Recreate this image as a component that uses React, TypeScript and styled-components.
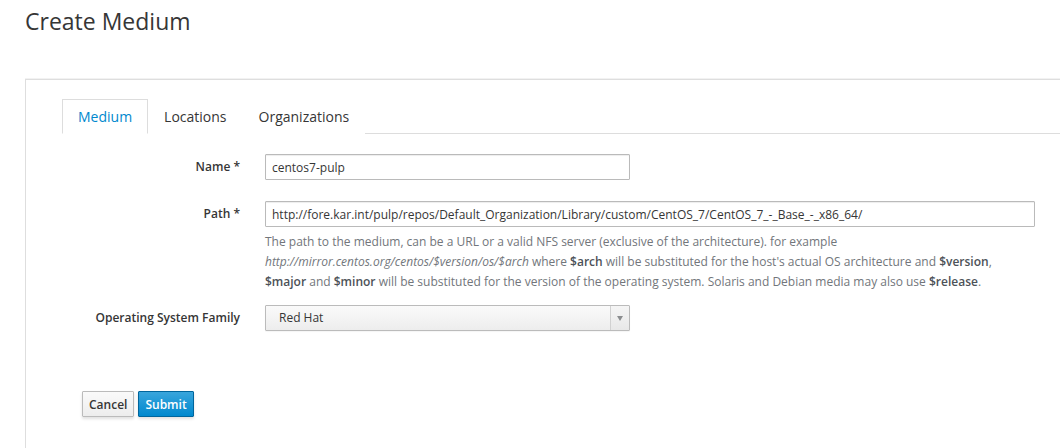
import React from 'react';
import styled, { createGlobalStyle } from "styled-components";

const GlobalStyle = createGlobalStyle`
  html, body {
    margin: 0;
    padding: 0;
    background: #ffffff;
    overflow: hidden;
  }
  body {
    font-family: "Open Sans", "Liberation Sans", Arial, sans-serif;
    font-size: 12px;
    color: #363636;
  }
`

const Page = styled.div`
  padding: 0 0 0 25px;
`

const Title = styled.h1`
  margin: 0;
  padding-top: 4px;
  height: 75px;
  font-size: 23px;
  font-weight: 400;
  line-height: 34px;
  color: #363636;
`

const Panel = styled.div`
  border-top: 1px solid #dedede;
  border-left: 1px solid #dedede;
  box-shadow: 0 -1px 0 #f2f2f2;
  padding: 19px 0 40px 36px;
`

const TabList = styled.ul`
  display: flex;
  margin: 0;
  padding: 0;
  list-style: none;
  border-bottom: 1px solid #dddddd;
`

const Tab = styled.li<{ active?: boolean }>`
  margin-bottom: -1px;
  padding: 0 15px;
  height: 33px;
  line-height: 33px;
  font-size: 14px;
  color: ${({ active }) => active ? "#0088ce" : "#363636"};
  background: #ffffff;
  border: 1px solid ${({ active }) => active ? "#dddddd" : "transparent"};
  border-bottom-color: ${({ active }) => active ? "#ffffff" : "transparent"};
  cursor: pointer;
`

const Form = styled.form`
  padding-top: 20px;
`

const FormGroup = styled.div<{ gap: number }>`
  display: grid;
  grid-template-columns: 178px 1fr;
  column-gap: 25px;
  align-items: start;
  margin-bottom: ${({ gap }) => gap}px;
`

const Label = styled.label`
  text-align: right;
  font-weight: 600;
  line-height: 26px;
  color: #363636;
`

const Field = styled.div<{ width: number }>`
  width: ${({ width }) => width}px;
`

const TextInput = styled.input`
  box-sizing: border-box;
  display: block;
  width: 100%;
  height: 26px;
  padding: 2px 6px;
  font-family: inherit;
  font-size: 12px;
  color: #363636;
  border: 1px solid #bababa;
  border-radius: 1px;
  box-shadow: inset 0 1px 1px rgba(3, 3, 3, 0.075);
  outline: none;
`

const HelpBlock = styled.div`
  margin-top: 5px;
  line-height: 20px;
  color: #72767b;
  white-space: nowrap;
  b { color: #4d5258; font-weight: 600; }
`

const SelectButton = styled.div`
  box-sizing: border-box;
  display: flex;
  height: 26px;
  border: 1px solid #bbbbbb;
  border-radius: 1px;
  background: linear-gradient(to bottom, #fafafa 0%, #ededed 100%);
  box-shadow: 0 1px 1px rgba(3, 3, 3, 0.04);
  cursor: pointer;
`

const SelectValue = styled.span`
  flex: 1;
  padding-left: 13px;
  line-height: 24px;
  color: #363636;
`

const SelectArrow = styled.span`
  width: 18px;
  border-left: 1px solid #d1d1d1;
  display: flex;
  align-items: center;
  justify-content: center;
  background: linear-gradient(to bottom, #f5f5f5 0%, #e8e8e8 100%);
`

const Caret = styled.i`
  width: 0;
  height: 0;
  border-left: 3px solid transparent;
  border-right: 3px solid transparent;
  border-top: 5px solid #8b8d8f;
`

const Actions = styled.div`
  display: flex;
  gap: 4px;
  padding: 60px 0 0 20px;
`

const Button = styled.button<{ primary?: boolean }>`
  box-sizing: border-box;
  height: 26px;
  padding: 0 6px;
  font-family: inherit;
  font-size: 12px;
  font-weight: 600;
  border-radius: 1px;
  cursor: pointer;
  color: ${({ primary }) => primary ? "#ffffff" : "#363636"};
  border: 1px solid ${({ primary }) => primary ? "#00659c" : "#bbbbbb"};
  background: ${({ primary }) => primary
    ? "linear-gradient(to bottom, #39a5dc 0%, #0088ce 100%)"
    : "linear-gradient(to bottom, #fafafa 0%, #ededed 100%)"};
  box-shadow: 0 2px 3px rgba(3, 3, 3, 0.12);
`

export default function App() {
  return (
    <>
      <GlobalStyle />
      <Page>
        <Title>Create Medium</Title>
        <Panel>
          <TabList>
            <Tab active>Medium</Tab>
            <Tab>Locations</Tab>
            <Tab>Organizations</Tab>
          </TabList>
          <Form>
            <FormGroup gap={21}>
              <Label>Name *</Label>
              <Field width={365}>
                <TextInput defaultValue="centos7-pulp" />
              </Field>
            </FormGroup>
            <FormGroup gap={13}>
              <Label>Path *</Label>
              <Field width={770}>
                <TextInput defaultValue="http://fore.kar.int/pulp/repos/Default_Organization/Library/custom/CentOS_7/CentOS_7_-_Base_-_x86_64/" />
                <HelpBlock>
                  The path to the medium, can be a URL or a valid NFS server (exclusive of the architecture). for example<br />
                  <i>http://mirror.centos.org/centos/$version/os/$arch</i> where <b>$arch</b> will be substituted for the host's actual OS architecture and <b>$version</b>,<br />
                  <b>$major</b> and <b>$minor</b> will be substituted for the version of the operating system. Solaris and Debian media may also use <b>$release</b>.
                </HelpBlock>
              </Field>
            </FormGroup>
            <FormGroup gap={0}>
              <Label>Operating System Family</Label>
              <Field width={365}>
                <SelectButton>
                  <SelectValue>Red Hat</SelectValue>
                  <SelectArrow><Caret /></SelectArrow>
                </SelectButton>
              </Field>
            </FormGroup>
            <Actions>
              <Button type="button">Cancel</Button>
              <Button type="button" primary>Submit</Button>
            </Actions>
          </Form>
        </Panel>
      </Page>
    </>
  );
}
